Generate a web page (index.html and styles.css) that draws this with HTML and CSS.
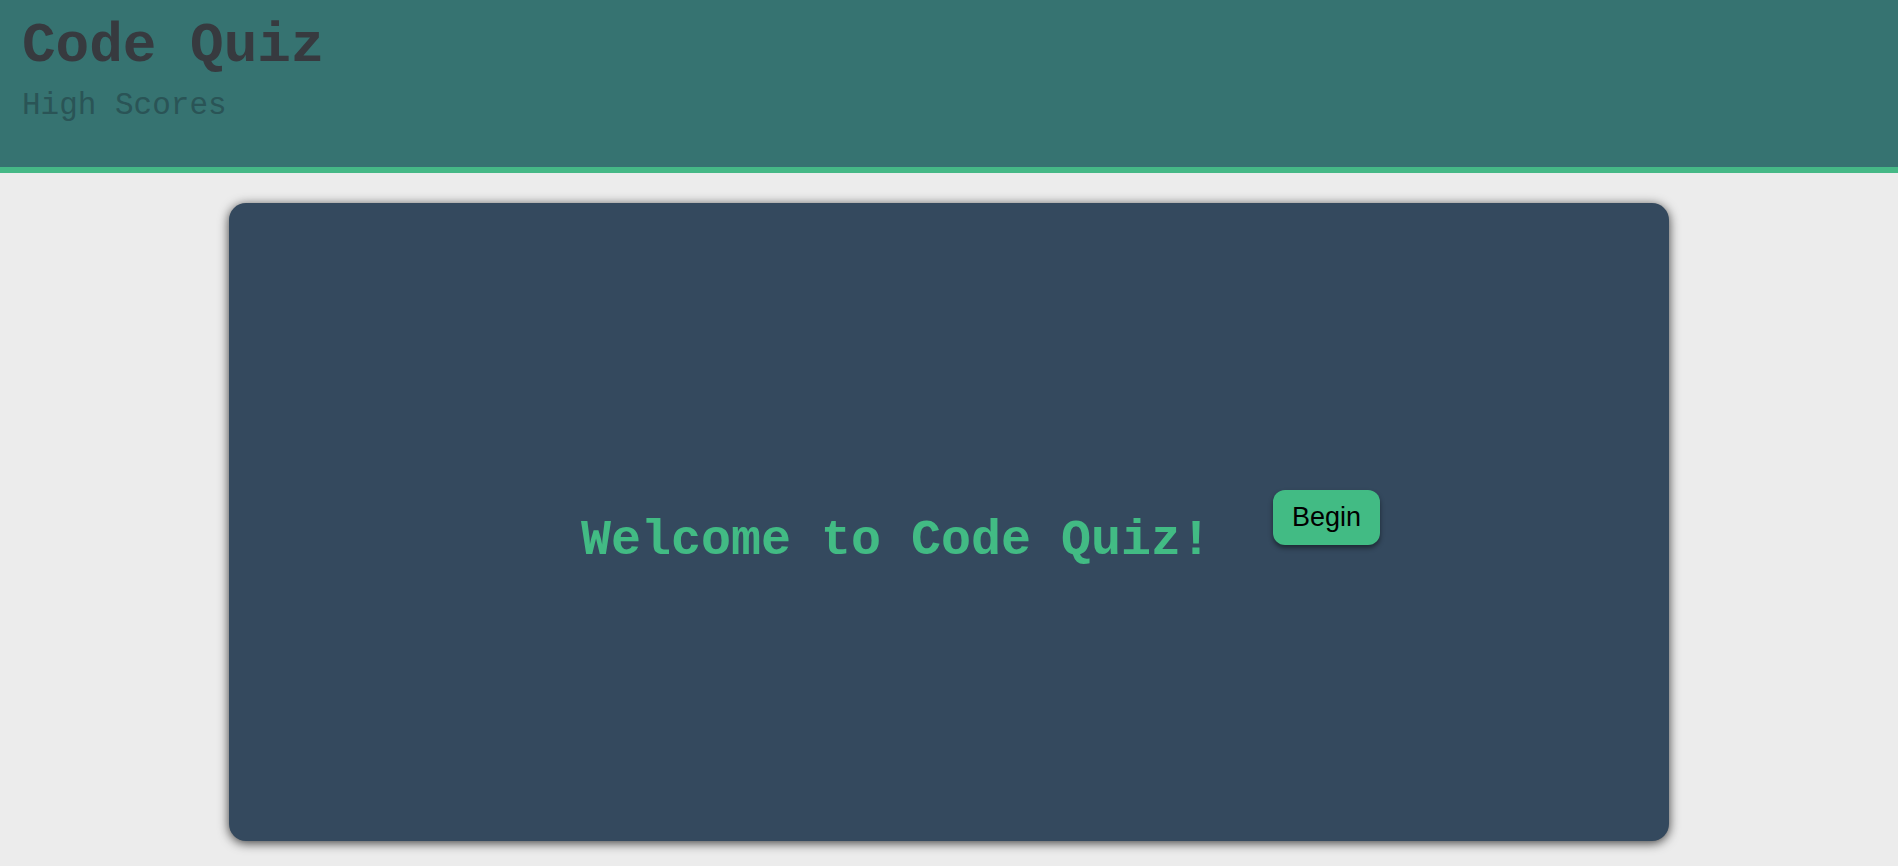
FILE: index.html
```html
<!DOCTYPE html>
<html lang="en">
<head>
<meta charset="utf-8">
<title>Code Quiz</title>
<link rel="stylesheet" href="styles.css">
</head>
<body>
<header class="site-header">
  <h1 class="site-title">Code Quiz</h1>
  <a class="scores-link" href="#">High Scores</a>
</header>
<main class="main">
  <section class="card">
    <h2 class="welcome">Welcome to Code Quiz!</h2>
    <button class="begin-btn" type="button">Begin</button>
  </section>
</main>
</body>
</html>
```

FILE: styles.css
```css
html, body {
  margin: 0;
  padding: 0;
}

body {
  background: #ececec;
  font-family: "Liberation Mono", "Courier New", monospace;
  min-height: 866px;
}

.site-header {
  background: #367371;
  border-bottom: 6px solid #45b886;
  padding: 15px 22px 43px;
  display: flex;
  flex-direction: column;
  align-items: flex-start;
}

.site-title {
  margin: 0;
  font-size: 56px;
  font-weight: bold;
  color: #373a3f;
  line-height: 1.133;
}

.scores-link {
  margin-top: 10px;
  font-size: 31px;
  color: #2a5456;
  text-decoration: none;
  line-height: 1.133;
}

.main {
  padding-top: 30px;
  display: flex;
  justify-content: center;
}

.card {
  width: 1440px;
  height: 638px;
  background: #34495e;
  border-radius: 17px;
  box-shadow: 0 2px 11px rgba(0, 0, 0, 0.75);
  display: flex;
  align-items: center;
  justify-content: center;
}

.welcome {
  margin: 40px 0 0 63px;
  font-size: 50px;
  font-weight: bold;
  color: #42bb84;
  line-height: 1.133;
}

.begin-btn {
  margin: 0 0 8px 62px;
  font-family: "Liberation Sans", Arial, sans-serif;
  font-size: 27px;
  color: #000;
  background: #42bb84;
  border: none;
  border-radius: 12px;
  padding: 12px 19px;
  box-shadow: 0 3px 5px rgba(0, 0, 0, 0.45);
  cursor: pointer;
}
```
